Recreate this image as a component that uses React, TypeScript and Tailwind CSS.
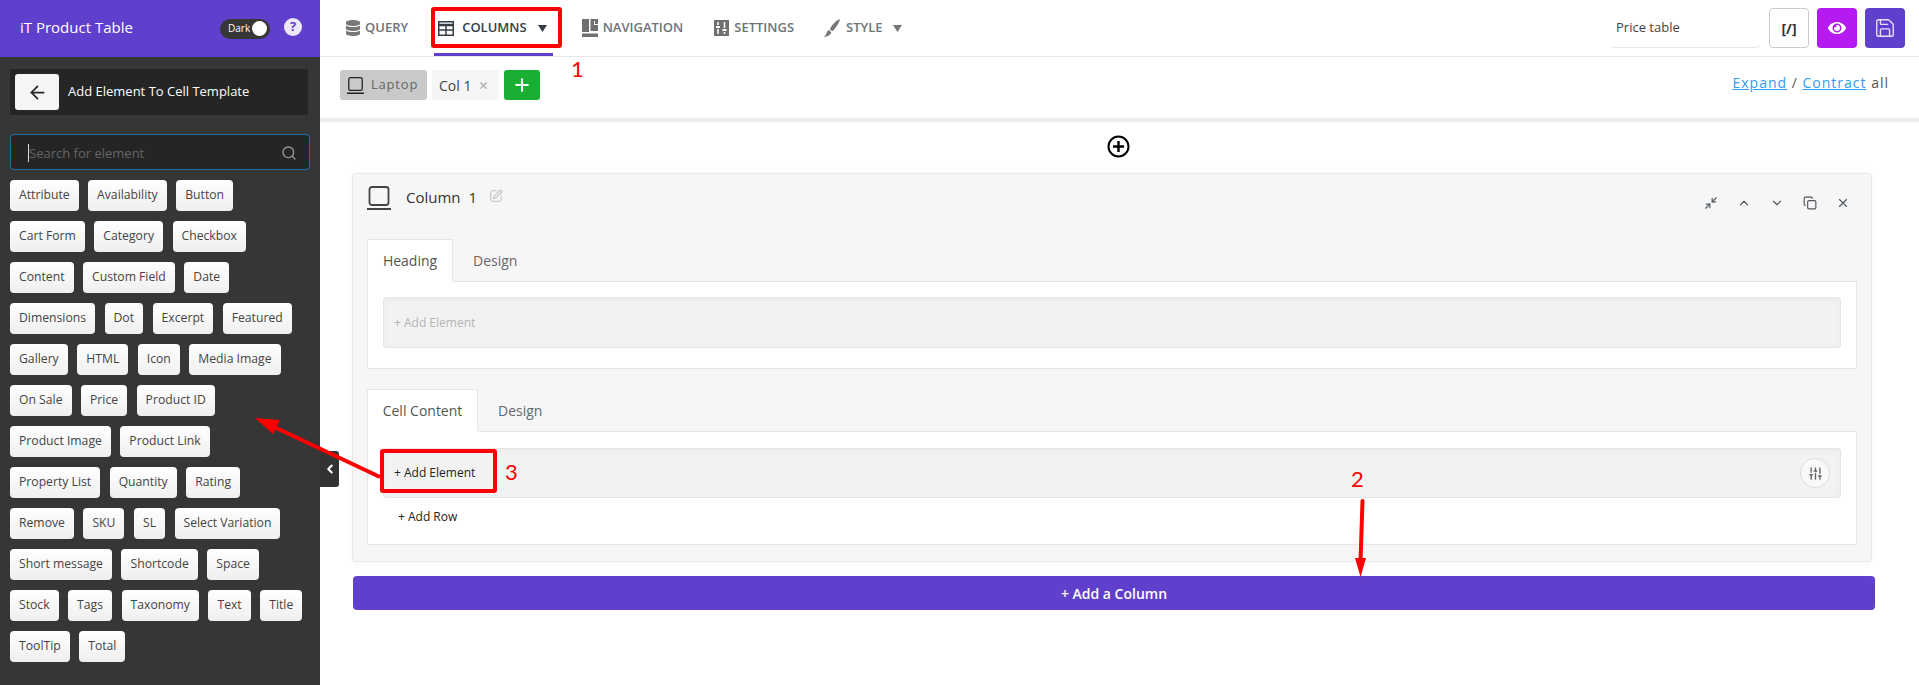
import React from "react";
import { FaDatabase, FaEye } from "react-icons/fa";
import { ArrowLeft, Search, Save, SquarePen, Minimize2, ChevronUp, ChevronDown, Copy, X, Plus, ChevronLeft, SlidersVertical } from "lucide-react";

const chips = ["Attribute","Availability","Button","Cart Form","Category","Checkbox","Content","Custom Field","Date","Dimensions","Dot","Excerpt","Featured","Gallery","HTML","Icon","Media Image","On Sale","Price","Product ID","Product Image","Product Link","Property List","Quantity","Rating","Remove","SKU","SL","Select Variation","Short message","Shortcode","Space","Stock","Tags","Taxonomy","Text","Title","ToolTip","Total"];

function Caret({ className }: { className?: string }) {
  return (
    <svg width="9" height="7" viewBox="0 0 9 7" className={className}>
      <path d="M0 0h9L4.500 7z" fill="currentColor" />
    </svg>
  );
}

function LaptopIcon({ size = 24, color = "#444" }: { size?: number; color?: string }) {
  return (
    <svg width={size} height={size} viewBox="0 0 24 24" fill="none">
      <rect x="2.500" y="1" width="19" height="18" rx="2.500" stroke={color} strokeWidth="1.800" />
      <path d="M0.500 23h23" stroke={color} strokeWidth="2.200" strokeLinecap="round" />
    </svg>
  );
}

function TableIcon() {
  return (
    <svg width="16" height="15" viewBox="0 0 16 15" fill="none">
      <rect x="0.750" y="0.750" width="14.500" height="13.500" stroke="#333c47" strokeWidth="1.500" />
      <path d="M0 4h16" stroke="#333c47" strokeWidth="2.500" />
      <path d="M0 9h16M8 4v10" stroke="#333c47" strokeWidth="1.500" />
    </svg>
  );
}

function NavIcon() {
  return (
    <svg width="16" height="18" viewBox="0 0 16 18" fill="#707070">
      <path d="M0 0h7v13H0zM8.500 0H16v5h-3V2h-1v4h4v6H8.500zM0 14.500h16V18H0z" />
    </svg>
  );
}

function SettingsIcon() {
  return (
    <svg width="15" height="16" viewBox="0 0 15 16">
      <rect width="15" height="16" fill="#707070" />
      <path d="M4 2v3M4 9v5M10.500 2v6M10.500 12v2" stroke="#fff" strokeWidth="1.500" />
      <path d="M2 6h4v2H2zM8.500 9h4v2h-4z" fill="#fff" />
    </svg>
  );
}

function BrushIcon() {
  return (
    <svg width="16" height="18" viewBox="0 0 16 18" fill="#777">
      <path d="M16 0C12 1.500 8 5.500 5.800 10.200L8.200 12.300C11.500 9.500 15 4.500 16 0z" />
      <path d="M4.800 11C2.800 11.800 3 15 0 18C3.500 17.500 7 16 7.300 13.200z" />
    </svg>
  );
}

function Tabs({ first, width }: { first: string; width: string }) {
  return (
    <div className="flex h-[43px] text-[14px] text-[#555] relative z-10 -mb-px">
      <div className={`${width} flex items-center justify-center bg-white border border-[#e5e5e5] border-b-white`}>{first}</div>
      <div className="ml-[20px] flex items-center text-[#646970]">Design</div>
    </div>
  );
}

function Annotations() {
  return (
    <>
      <svg width="1919" height="685" className="absolute left-0 top-0 z-30 pointer-events-none" fill="none">
        <rect x="433" y="9" width="127" height="37" rx="1" stroke="#f00" strokeWidth="4" />
        <rect x="382" y="451" width="113" height="40" rx="1" stroke="#f00" strokeWidth="4" />
        <path d="M380 477L270 425" stroke="#f00" strokeWidth="4" />
        <path d="M255 418L280 420L273 434z" fill="#f00" />
        <path d="M1362.500 501L1360.500 562" stroke="#f00" strokeWidth="4" strokeLinecap="round" />
        <path d="M1355 558H1366L1360.500 577z" fill="#f00" />
      </svg>
      <span className="absolute left-[571px] top-[55px] z-30 text-[22px] leading-[28px] text-[#f00] font-['Lato',sans-serif]">1</span>
      <span className="absolute left-[1351px] top-[465px] z-30 text-[22px] leading-[28px] text-[#f00] font-['Lato',sans-serif]">2</span>
      <span className="absolute left-[505px] top-[458px] z-30 text-[22px] leading-[28px] text-[#f00] font-['Lato',sans-serif]">3</span>
    </>
  );
}

export default function App() {
  return (
    <div className="relative flex w-[1919px] h-[685px] overflow-hidden bg-white font-['Open_Sans',sans-serif]">
      <aside className="w-[320px] shrink-0 flex flex-col bg-[#363636]">
        <div className="h-[57px] bg-[#5f3fcb] flex items-center pl-[20px] pr-[18px] text-white">
          <span className="text-[15px] -mt-[2px]">iT Product Table</span>
          <div className="ml-auto flex items-center gap-[14px]">
            <div className="w-[50px] h-[20px] rounded-full bg-[#363636] flex items-center justify-between pl-[8px] pr-[3px]">
              <span className="text-[10px]">Dark</span>
              <span className="w-[15px] h-[15px] rounded-full bg-white" />
            </div>
            <span className="w-[18px] h-[18px] -mt-[3px] rounded-full bg-[#ece8fa] text-[#5f3fcb] text-[13px] font-bold flex items-center justify-center">?</span>
          </div>
        </div>
        <div className="px-[10px]">
          <div className="mt-[12px] h-[46px] w-[298px] bg-[#252525] flex items-center pl-[5px]">
            <div className="w-[44px] h-[36px] rounded-[3px] bg-[#f5f5f5] flex items-center justify-center">
              <ArrowLeft size={21} color="#252525" strokeWidth={2} />
            </div>
            <span className="ml-[9px] text-[13px] font-medium text-white">Add Element To Cell Template</span>
          </div>
          <div className="mt-[19px] h-[36px] w-[300px] rounded-[4px] bg-[#252525] border border-[#1d6fa8] flex items-center pl-[17px] pr-[12px]">
            <span className="mt-[2px] text-[13px] text-[#666] border-l border-[#ddd] leading-[18px]">Search for element</span>
            <Search size={16} color="#999" className="ml-auto mt-[2px]" />
          </div>
          <div className="mt-[10px] w-[296px] flex flex-wrap gap-x-[9.500px] gap-y-[10px]">
            {chips.map((c) => (
              <div key={c} className="h-[31px] px-[9px] rounded-[4px] bg-gradient-to-b from-white to-[#efefef] text-[12.200px] text-[#444] flex items-center">{c}</div>
            ))}
          </div>
        </div>
      </aside>

      <main className="flex-1 min-w-0 flex flex-col">
        <header className="h-[57px] shrink-0 border-b border-[#e5e5e5] flex items-center pl-[25px] pr-[14px] text-[13px] font-semibold text-[#6d7278]">
          <div className="flex items-center gap-[4px]"><FaDatabase size={16} color="#777" />QUERY</div>
          <div className="relative ml-[30px] h-full flex items-center text-[#333c47]">
            <TableIcon />
            <span className="ml-[8px]">COLUMNS</span>
            <Caret className="ml-[11px] text-[#333c47]" />
            <span className="absolute -left-[4px] -right-[6px] bottom-0 h-[3px] bg-[#5f3fcb]" />
          </div>
          <div className="ml-[35px] flex items-center gap-[5px]"><NavIcon />NAVIGATION</div>
          <div className="ml-[31px] flex items-center gap-[5px]"><SettingsIcon />SETTINGS</div>
          <div className="ml-[30px] flex items-center gap-[6px]"><BrushIcon />STYLE<Caret className="ml-[4px] text-[#777]" /></div>
          <div className="ml-auto flex items-center">
            <div className="w-[149px] h-[40px] pl-[5px] border-b border-[#e5e5e5] rounded-[4px] flex items-center text-[13px] font-normal text-[#444]">Price table</div>
            <div className="ml-[9px] w-[40px] h-[40px] rounded-[4px] border border-[#ccc] flex items-center justify-center text-[14px] font-bold text-[#333]">[/]</div>
            <div className="ml-[8px] w-[40px] h-[40px] rounded-[4px] bg-[#b51af0] flex items-center justify-center"><FaEye size={18} color="#fff" /></div>
            <div className="ml-[8px] w-[40px] h-[40px] rounded-[4px] bg-[#5f3fcb] flex items-center justify-center"><Save size={22} color="#e6e0fa" strokeWidth={1.500} /></div>
          </div>
        </header>

        <div className="h-[65px] shrink-0 border-b-[4px] border-[#eeeeee] flex justify-between pl-[20px] pr-[30px] pt-[13px]">
          <div className="flex items-start gap-[5px] text-[13px]">
            <div className="w-[87px] h-[30px] rounded-[3px] bg-[#c9c9c9] flex items-center pl-[7px] gap-[7px] text-[#666] tracking-[0.800px]"><LaptopIcon size={17} color="#222" />Laptop</div>
            <div className="w-[67px] h-[30px] rounded-[3px] bg-[#f5f5f5] flex items-center pl-[7px] gap-[7px] text-[14px] text-[#444]">Col 1<X size={11} color="#aaa" strokeWidth={2.500} /></div>
            <div className="w-[36px] h-[30px] rounded-[3px] bg-[#1aaf33] flex items-center justify-center"><Plus size={20} color="#fff" strokeWidth={2.500} /></div>
          </div>
          <div className="text-[14px] leading-[26px] tracking-[1px] text-[#555]">
            <span className="text-[#2f9bf5] underline">Expand</span> / <span className="text-[#2f9bf5] underline">Contract</span> all
          </div>
        </div>

        <div className="h-[51px] shrink-0 flex items-center justify-center pr-[3px] pb-[2px]">
          <svg width="23" height="23" viewBox="0 0 23 23" fill="none" stroke="#000">
            <circle cx="11.500" cy="11.500" r="10" strokeWidth="2" />
            <path d="M6 11.500h11M11.500 6v11" strokeWidth="2.400" />
          </svg>
        </div>

        <section className="ml-[32px] w-[1520px] h-[389px] shrink-0 rounded-[4px] border border-[#e8e8e8] bg-[#f6f6f6] shadow-[0_0_12px_rgba(0,0,0,0.03)] px-[14px]">
          <div className="h-[65px] flex items-start pt-[12px]">
            <LaptopIcon size={24} />
            <span className="ml-[15px] mt-[1px] text-[15px] leading-[20px] text-[#333] [word-spacing:4px]">Column 1</span>
            <SquarePen size={14} color="#c4c4c4" className="ml-[12px] mt-[3px]" />
            <div className="ml-auto mt-[10px] flex items-center gap-[19px] pr-[7px] text-[#50575e]">
              <Minimize2 size={14} />
              <ChevronUp size={14} />
              <ChevronDown size={14} />
              <Copy size={14} />
              <X size={14} />
            </div>
          </div>

          <Tabs first="Heading" width="w-[86px]" />
          <div className="h-[88px] border border-[#e5e5e5] bg-white px-[15px] pt-[15px]">
            <div className="h-[51px] rounded-[3px] border border-[#e5e5e5] bg-[#f2f2f2] shadow-[inset_0_2px_6px_rgba(0,0,0,0.03)] flex items-center pl-[10px] text-[12px] text-[#b5b5b5]">+ Add Element</div>
          </div>

          <div className="h-[20px]" />
          <Tabs first="Cell Content" width="w-[111px]" />
          <div className="h-[114px] border border-[#e5e5e5] bg-white px-[15px] pt-[16px]">
            <div className="h-[50px] rounded-[3px] border border-[#e5e5e5] bg-[#f2f2f2] shadow-[inset_0_2px_6px_rgba(0,0,0,0.03)] flex items-center justify-between pl-[10px] pr-[10px] text-[12px] text-[#222]">
              + Add Element
              <span className="w-[30px] h-[30px] rounded-full border border-[#ddd] bg-[#f9f9f9] flex items-center justify-center"><SlidersVertical size={15} color="#666" strokeWidth={2.200} /></span>
            </div>
            <div className="mt-[10px] ml-[15px] text-[12px] leading-[18px] text-[#222]">+ Add Row</div>
          </div>
        </section>

        <div className="mt-[14px] ml-[33px] w-[1522px] h-[34px] shrink-0 rounded-[4px] bg-[#5f3fcb] flex items-center justify-center text-[14px] font-semibold text-white">+ Add a Column</div>
      </main>

      <div className="absolute left-[320px] top-[451px] z-20 w-[19px] h-[36px] rounded-r-[3px] bg-[#333] flex items-center justify-center">
        <ChevronLeft size={14} color="#fff" strokeWidth={3.500} />
      </div>
      <Annotations />
    </div>
  );
}
